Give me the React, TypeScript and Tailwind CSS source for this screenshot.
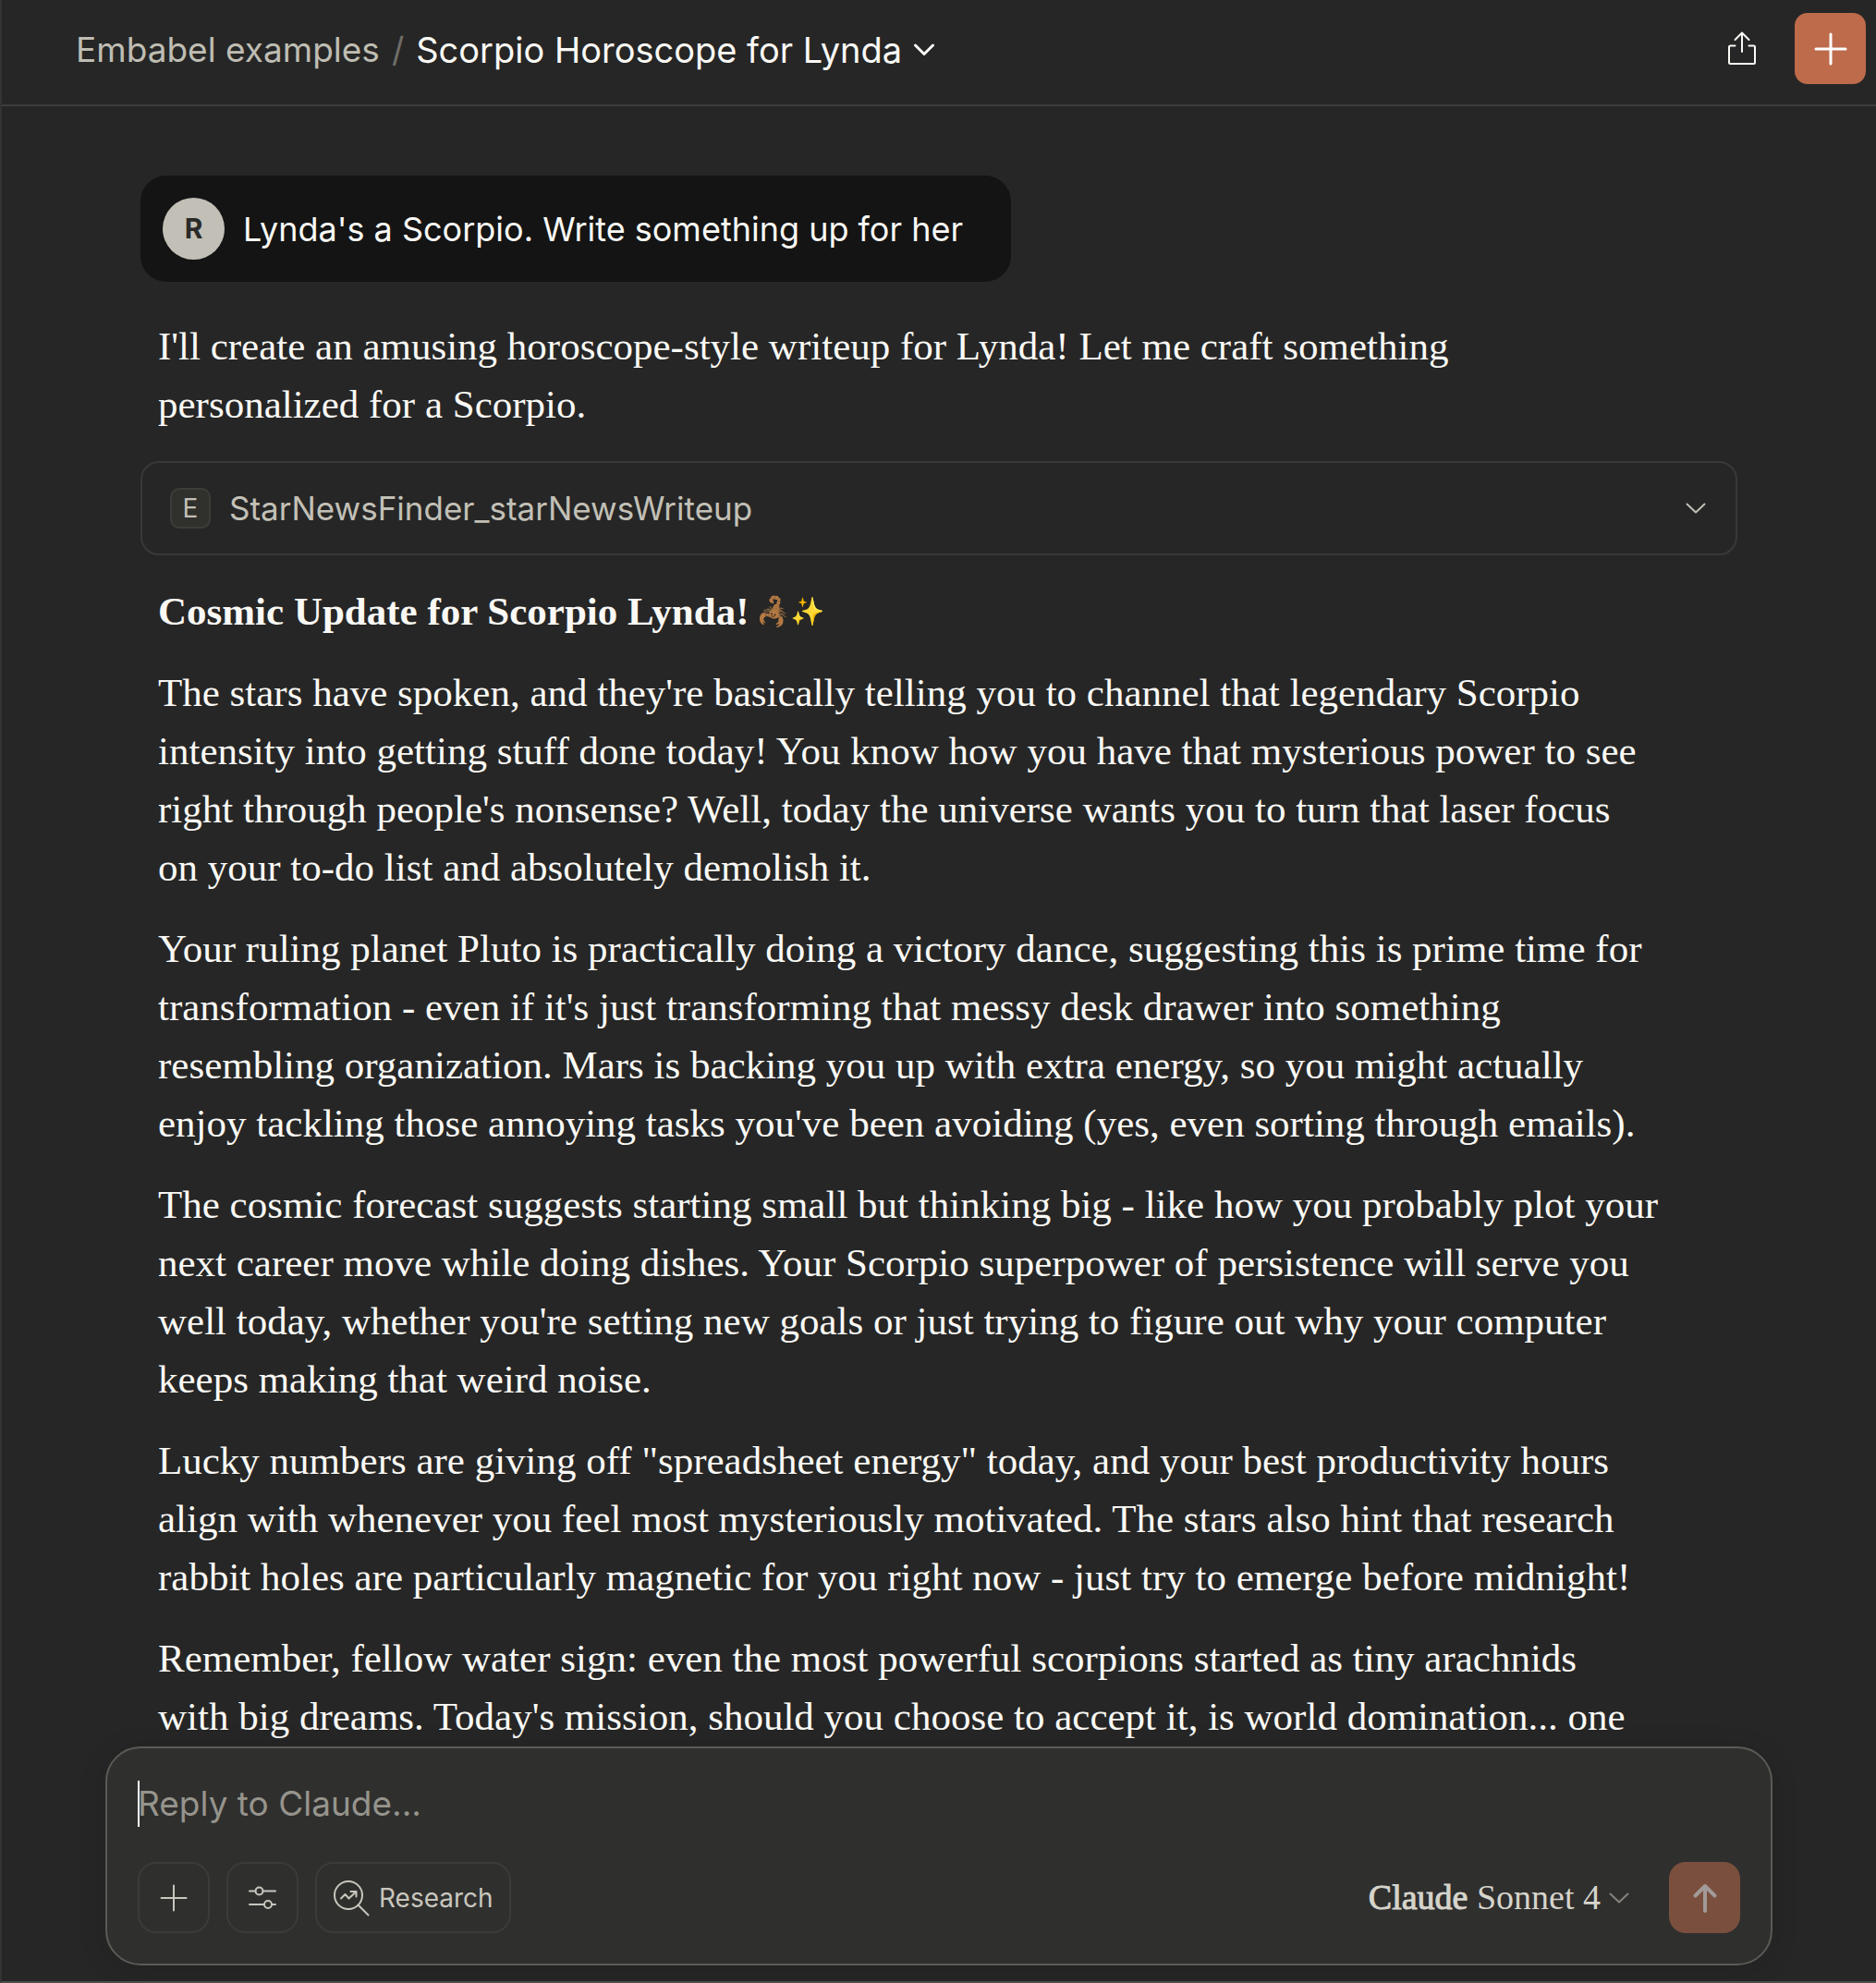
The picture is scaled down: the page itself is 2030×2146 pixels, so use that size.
import type { ReactNode } from "react";

const paragraphs: string[][] = [
  [
    "The stars have spoken, and they're basically telling you to channel that legendary Scorpio",
    "intensity into getting stuff done today! You know how you have that mysterious power to see",
    "right through people's nonsense? Well, today the universe wants you to turn that laser focus",
    "on your to-do list and absolutely demolish it.",
  ],
  [
    "Your ruling planet Pluto is practically doing a victory dance, suggesting this is prime time for",
    "transformation - even if it's just transforming that messy desk drawer into something",
    "resembling organization. Mars is backing you up with extra energy, so you might actually",
    "enjoy tackling those annoying tasks you've been avoiding (yes, even sorting through emails).",
  ],
  [
    "The cosmic forecast suggests starting small but thinking big - like how you probably plot your",
    "next career move while doing dishes. Your Scorpio superpower of persistence will serve you",
    "well today, whether you're setting new goals or just trying to figure out why your computer",
    "keeps making that weird noise.",
  ],
  [
    "Lucky numbers are giving off \"spreadsheet energy\" today, and your best productivity hours",
    "align with whenever you feel most mysteriously motivated. The stars also hint that research",
    "rabbit holes are particularly magnetic for you right now - just try to emerge before midnight!",
  ],
  [
    "Remember, fellow water sign: even the most powerful scorpions started as tiny arachnids",
    "with big dreams. Today's mission, should you choose to accept it, is world domination... one",
  ],
];

function Icon({ className, box, width = 2, children }: { className: string; box: string; width?: number; children: ReactNode }) {
  return (
    <svg
      viewBox={box}
      className={className}
      fill="none"
      stroke="currentColor"
      strokeWidth={width}
      strokeLinecap="round"
      strokeLinejoin="round"
      aria-hidden="true"
    >
      {children}
    </svg>
  );
}

function Lines({ lines }: { lines: string[] }) {
  return (
    <p>
      {lines.map((line, i) => (
        <span key={line}>
          {line}
          {i < lines.length - 1 && <br />}
        </span>
      ))}
    </p>
  );
}

function Header() {
  return (
    <header className="flex h-[115px] shrink-0 items-start justify-between border-b-2 border-[#3d3d3c] pr-[11px] pl-20 pt-[14px]">
      <nav aria-label="Breadcrumb" className="flex h-20 items-center whitespace-nowrap">
        <a href="#project" className="text-[37px] text-[#bfbdb3]">Embabel examples</a>
        <span className="px-[13px] text-[37px] text-[#6f6e68]">/</span>
        <button type="button" className="flex items-center gap-3 text-[38px] text-[#faf9f5]">
          Scorpio Horoscope for Lynda
          <Icon className="h-[14px] w-6" box="0 0 24 14" width={3}>
            <path d="M2.5 2 12 11.5 21.5 2" />
          </Icon>
        </button>
      </nav>
      <div className="flex items-center gap-[41px]">
        <button type="button" aria-label="Share" className="text-[#faf9f5]">
          <Icon className="h-[38px] w-8" box="0 1 32 38" width={2}>
            <path d="M8.5 16.5H3.5A1.5 1.5 0 0 0 2 18V34.5A1.5 1.5 0 0 0 3.500 36H28.500A1.500 1.500 0 0 0 30 34.500V18A1.500 1.500 0 0 0 28.500 16.500H23.500" />
            <path d="M16 23V2.500M8.500 10 16 2.500 23.500 10" />
          </Icon>
        </button>
        <button type="button" aria-label="New chat" className="flex size-[77px] items-center justify-center rounded-[14px] bg-[#bd6b4b] text-white">
          <Icon className="size-9" box="0 0 36 36" width={3}>
            <path d="M18 2V34M2 18H34" />
          </Icon>
        </button>
      </div>
    </header>
  );
}

function Composer() {
  const tool = "flex h-[77px] items-center justify-center rounded-[20px] border-2 border-[#3b3b39]";
  return (
    <form className="mx-auto w-full max-w-[1804px] rounded-[38px] border-2 border-[#5b5a55] bg-[#2f2f2e] px-[33px] pt-[34px] pb-[33px] shadow-[0_4px_30px_rgba(0,0,0,0.12)]">
      <div className="relative flex h-[52px] items-center">
        <span className="absolute left-0 h-[50px] w-[2px] bg-white" />
        <input
          type="text"
          aria-label="Reply to Claude"
          placeholder="Reply to Claude..."
          className="w-full bg-transparent text-[37px] text-[#faf9f5] outline-none placeholder:text-[#96948c] placeholder:opacity-100"
        />
      </div>
      <div className="mt-[37px] flex items-center justify-between text-[#c8c6bd]">
        <div className="flex gap-[18px]">
          <button type="button" aria-label="Add attachment" className={`${tool} w-[78px]`}>
            <Icon className="size-[30px]" box="0 0 30 30">
              <path d="M15 1.500V28.500M1.500 15H28.500" />
            </Icon>
          </button>
          <button type="button" aria-label="Tools" className={`${tool} w-[78px]`}>
            <Icon className="h-[26px] w-[30px]" box="0 0 30 26">
              <path d="M1 5.500H7.500M15.500 5.500H29M1 20H17M25 20H29" />
              <circle cx="11.500" cy="5.500" r="4" />
              <circle cx="21" cy="20" r="4" />
            </Icon>
          </button>
          <button type="button" className={`${tool} gap-[10px] px-[17px] text-[28px]`}>
            <Icon className="size-10" box="0 0 40 40">
              <circle cx="17" cy="17" r="15" />
              <path d="M27.500 27.500 38.500 38.500" />
              <path d="M9 20.500 13.500 16 17.500 20.500 25 13.500M19.500 13H25.500V18.500" />
            </Icon>
            Research
          </button>
        </div>
        <div className="flex items-center gap-[43px]">
          <button type="button" className="flex items-center gap-[9px] font-['Liberation_Serif',serif] text-[38px] text-[#d6d4cb]">
            <span><span className="[-webkit-text-stroke:1px_currentColor]">Claude</span> Sonnet 4</span>
            <Icon className="h-3 w-[22px] text-[#85837c]" box="0 0 22 12">
              <path d="M1.500 1.500 11 10.500 20.500 1.500" />
            </Icon>
          </button>
          <button type="submit" aria-label="Send message" className="flex size-[77px] items-center justify-center rounded-[18px] bg-[#7a4f3d] text-[#a29a98]">
            <Icon className="h-8 w-7" box="0 0 28 32" width={4}>
              <path d="M14 30V3M3.500 13.500 14 3 24.500 13.500" />
            </Icon>
          </button>
        </div>
      </div>
    </form>
  );
}

export default function App() {
  return (
    <div className="flex h-screen flex-col overflow-hidden border-b-2 border-l-2 border-b-[#4d4d4c] border-l-[#343433] bg-[#262626] font-['Inter',sans-serif]">
      <Header />
      <main className="min-h-0 flex-1 overflow-hidden px-4 pt-[75px]">
        <div className="mx-auto max-w-[1728px]">
          <div className="flex w-fit items-center gap-5 rounded-[28px] bg-[#141414] py-6 pr-[52px] pl-6">
            <span className="flex size-[67px] items-center justify-center rounded-full bg-[#c2c0b6] text-[30px] font-bold text-[#2b2b29]">R</span>
            <p className="text-[36px] text-[#faf9f5]">Lynda's a Scorpio. Write something up for her</p>
          </div>
          <div className="mt-[38px] px-[19px] font-['Liberation_Serif',serif] text-[43px] leading-[63px] text-[#faf9f5]">
            <Lines lines={["I'll create an amusing horoscope-style writeup for Lynda! Let me craft something", "personalized for a Scorpio."]} />
          </div>
          <button type="button" className="mt-[30px] flex h-[102px] w-full items-center rounded-[20px] border-2 border-[#393938] pr-8 pl-[30px] text-[#c2c0b6]">
            <span className="flex size-11 items-center justify-center rounded-[10px] border-2 border-[#3c3c39] bg-[#30302d] text-[28px]">E</span>
            <span className="ml-5 text-[35px]">StarNewsFinder_starNewsWriteup</span>
            <Icon className="ml-auto h-3 w-[22px]" box="0 0 22 12">
              <path d="M1.500 1.500 11 10.500 20.500 1.500" />
            </Icon>
          </button>
          <div className="mt-[29px] flex flex-col gap-[25px] px-[19px] font-['Liberation_Serif',serif] text-[43px] leading-[63px] whitespace-nowrap text-[#faf9f5]">
            <h2 className="flex items-center gap-2 font-bold">
              Cosmic Update for Scorpio Lynda!
              <span className="text-[30px] leading-none font-normal"><span className="brightness-75 inline-block">🦂</span>✨</span>
            </h2>
            {paragraphs.map((lines) => (
              <Lines key={lines[0]} lines={lines} />
            ))}
          </div>
        </div>
      </main>
      <footer className="px-4 pb-[17px]">
        <Composer />
      </footer>
    </div>
  );
}
